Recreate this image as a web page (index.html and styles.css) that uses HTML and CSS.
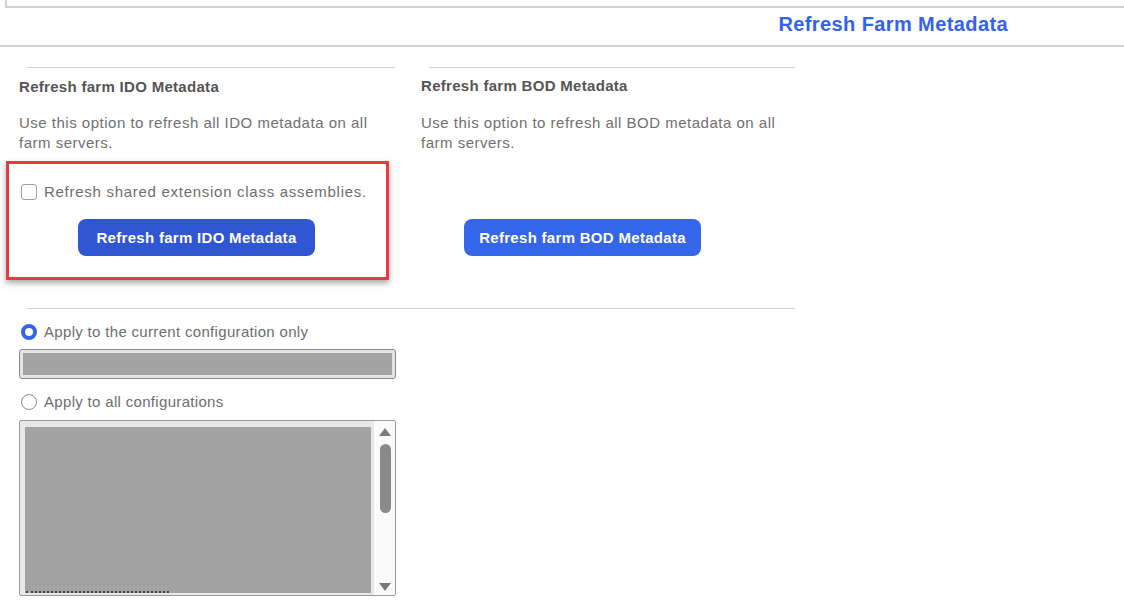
FILE: index.html
```html
<!DOCTYPE html>
<html>
<head>
<meta charset="utf-8">
<link rel="stylesheet" href="styles.css">
</head>
<body>
<div class="frame-top"></div>
<div class="title-bar"><span class="title">Refresh Farm Metadata</span></div>
<div class="content">
  <div class="cols">
    <section class="col col-left">
      <div class="divider"></div>
      <h2 class="heading">Refresh farm IDO Metadata</h2>
      <p class="desc">Use this option to refresh all IDO metadata on all farm servers.</p>
      <div class="highlight">
        <label class="check-row"><span class="checkbox"></span>Refresh shared extension class assemblies.</label>
        <div class="btn-row"><button class="btn btn-dark">Refresh farm IDO Metadata</button></div>
      </div>
    </section>
    <section class="col col-right">
      <div class="divider"></div>
      <h2 class="heading">Refresh farm BOD Metadata</h2>
      <p class="desc">Use this option to refresh all BOD metadata on all farm servers.</p>
      <button class="btn btn-light">Refresh farm BOD Metadata</button>
    </section>
  </div>
  <div class="divider wide"></div>
  <div class="options">
    <label class="radio-row first"><span class="radio checked"></span>Apply to the current configuration only</label>
    <div class="select-box"><div class="select-fill"></div></div>
    <label class="radio-row"><span class="radio"></span>Apply to all configurations</label>
    <div class="listbox">
      <div class="list-fill"><div class="list-garble"></div></div>
      <div class="scrollbar">
        <svg class="arrow" width="12" height="8" viewBox="0 0 12 8"><path d="M6 0 L12 8 L0 8 Z" fill="#7a7a7a"/></svg>
        <div class="thumb"></div>
        <svg class="arrow down" width="12" height="8" viewBox="0 0 12 8"><path d="M0 0 L12 0 L6 8 Z" fill="#7a7a7a"/></svg>
      </div>
    </div>
  </div>
</div>
</body>
</html>
```
FILE: styles.css
```css
* { box-sizing: border-box; }
html, body { margin: 0; padding: 0; background: #fff; }
body { font-family: "Liberation Sans", Arial, sans-serif; width: 1124px; height: 602px; overflow: hidden; }

.frame-top {
  margin-left: 5px;
  height: 8px;
  border-left: 2px solid #d2d2d2;
  border-bottom: 2px solid #d2d2d2;
}
.title-bar {
  height: 39px;
  border-bottom: 2px solid #d4d4d4;
  display: flex;
  justify-content: flex-end;
  padding-right: 116px;
}
.title {
  font-size: 20px;
  letter-spacing: 0.4px;
  font-weight: bold;
  line-height: 32px;
  color: #3262ee;
}

.content { padding-left: 19px; width: 800px; }
.cols {
  display: grid;
  grid-template-columns: 376px 374px;
  column-gap: 26px;
  align-items: start;
}
.divider {
  margin-top: 20px;
  margin-left: 8px;
  height: 1px;
  background: #cfcfcf;
}
.divider.wide { margin-top: 28px; width: 768px; }

.heading {
  margin: 9px 0 0;
  font-size: 15px;
  letter-spacing: 0.3px;
  line-height: 20px;
  font-weight: bold;
  color: #555;
}
.col-right .heading { margin-top: 8px; }
.desc {
  margin: 16px 0 0;
  font-size: 15px;
  letter-spacing: 0.5px;
  line-height: 20px;
  color: #707070;
  width: 362px;
}
.col-right .desc { margin-top: 17px; }

.highlight {
  margin: 8px 0 0 -13px;
  width: 383px;
  height: 119px;
  border: 3px solid #ea3a3f;
  box-shadow: 0 3px 6px rgba(0,0,0,0.35);
  padding: 18px 0 0 12px;
}
.check-row {
  display: flex;
  align-items: center;
  gap: 7px;
  font-size: 15px;
  letter-spacing: 0.72px;
  line-height: 20px;
  color: #6e6e6e;
}
.checkbox {
  width: 16px; height: 16px;
  border: 1.5px solid #a0a0a0;
  border-radius: 3px;
  background: #fff;
  flex: none;
}
.btn-row { margin-top: 17px; padding-left: 57px; }

.btn {
  display: block;
  width: 237px;
  height: 37px;
  border: none;
  border-radius: 8px;
  color: #fff;
  font-family: "Liberation Sans", Arial, sans-serif;
  font-size: 15px;
  letter-spacing: 0.3px;
  font-weight: bold;
  padding: 0;
}
.btn-dark { background: #2f56d3; }
.btn-light { background: #3565e8; margin: 66px 0 0 43px; }

.radio-row {
  display: flex;
  align-items: center;
  gap: 7px;
  margin-top: 13px;
  margin-left: 2px;
  font-size: 15px;
  letter-spacing: 0.32px;
  line-height: 20px;
  color: #6e6e6e;
}
.radio {
  width: 16px; height: 16px;
  border-radius: 50%;
  border: 1px solid #8c8c8c;
  background: #fff;
  flex: none;
}
.radio.checked { border: 4px solid #3464e8; }

.select-box {
  margin-top: 7px;
  width: 377px;
  height: 30px;
  border: 1px solid #8a8a8a;
  border-radius: 3px;
  background: #e4e4e4;
  padding: 3px;
}
.select-fill { height: 100%; background: #a3a3a3; }

.listbox {
  margin-top: 8px;
  width: 377px;
  height: 176px;
  border: 1px solid #9a9a9a;
  border-radius: 2px;
  background: #e8e8e8;
  display: flex;
  padding: 6px 0 2px 5px;
}
.list-fill {
  width: 346px;
  background: #a3a3a3;
  position: relative;
}
.list-garble {
  position: absolute;
  left: 1px; bottom: 0;
  width: 143px;
  border-bottom: 2px dotted #444;
}
.scrollbar {
  margin: -6px 0 -2px 3px;
  width: 21px;
  background: #fafafa;
  display: flex;
  flex-direction: column;
  align-items: center;
  padding: 7px 0 4px 1px;
}
.arrow { flex: none; }
.thumb {
  margin-top: 8px;
  width: 11px;
  height: 69px;
  border-radius: 6px;
  background: #8a8a8a;
}
.arrow.down { margin-top: auto; }
```
